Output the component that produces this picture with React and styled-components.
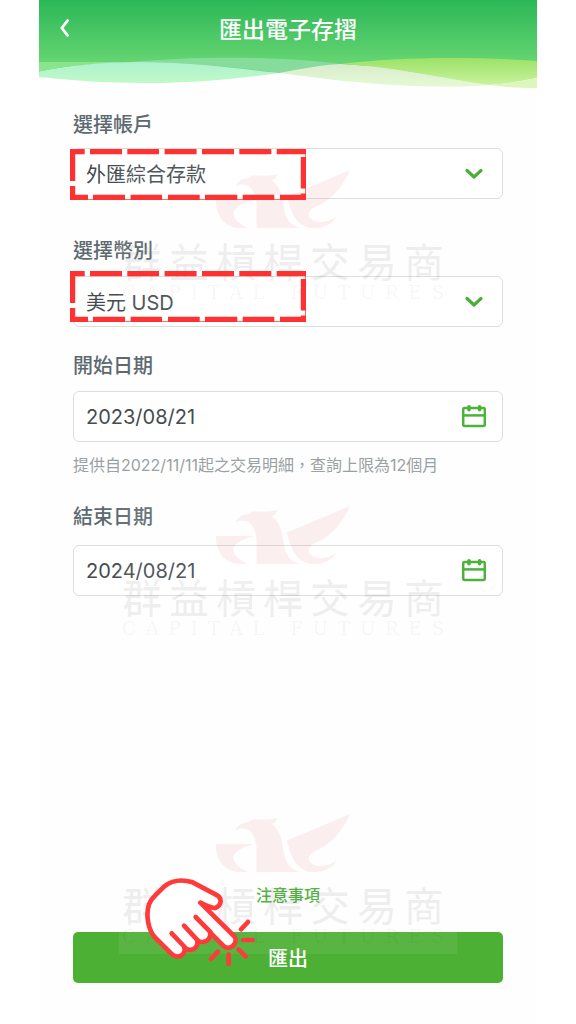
import React, { useState } from "react";
import styled, { createGlobalStyle } from "styled-components";

const ACCOUNTS = ["外匯綜合存款"];
const CURRENCIES = ["美元 USD"];

const BackIcon = () => (
  <svg width="12" height="20" viewBox="0 0 12 20" fill="none" aria-hidden="true">
    <path
      d="M8.6 2.6L2.8 10L8.6 17.4"
      stroke="#fff"
      strokeWidth="2.8"
      strokeLinecap="round"
      strokeLinejoin="round"
    />
  </svg>
);

const ChevronIcon = () => (
  <svg width="24" height="24" viewBox="0 0 24 24" fill="none" aria-hidden="true">
    <path
      d="M5 8.5L12 15L19 8.5"
      stroke="#4cae38"
      strokeWidth="3.2"
      strokeLinecap="round"
      strokeLinejoin="round"
    />
  </svg>
);

const CalendarIcon = () => (
  <svg width="24" height="24" viewBox="0 0 24 24" fill="none" aria-hidden="true">
    <g stroke="#4cb239" strokeWidth="2.5">
      <rect x="1.2" y="3" width="21.6" height="18" rx="1.4" />
      <path d="M1.2 10.4H23" />
      <path d="M7 1.8V4.8M17.6 1.8V4.8" strokeWidth="3.6" strokeLinecap="round" />
    </g>
  </svg>
);

const HeaderWaves = () => (
  <WavesSvg viewBox="0 0 498 88" preserveAspectRatio="none" aria-hidden="true">
    <defs>
      <linearGradient id="base" x1="0" y1="0" x2="0" y2="1">
        <stop offset="0" stopColor="#2cb757" />
        <stop offset="1" stopColor="#6fda76" />
      </linearGradient>
      <linearGradient id="mint" x1="0" y1="0" x2="0" y2="1">
        <stop offset="0" stopColor="#aef0d0" />
        <stop offset="1" stopColor="#c0fac6" />
      </linearGradient>
      <linearGradient id="cream" x1="0" y1="0" x2="0" y2="1">
        <stop offset="0" stopColor="#d9ecd0" />
        <stop offset="1" stopColor="#e4fad2" />
      </linearGradient>
      <linearGradient id="lime" x1="0" y1="0" x2="0" y2="1">
        <stop offset="0" stopColor="#9be267" />
        <stop offset="1" stopColor="#caf29e" />
      </linearGradient>
    </defs>
    <path d="M0 0H498V66H300L240 73L120 66H0Z" fill="url(#base)" />
    <path d="M0 62H92C60 63 30 66 0 72Z" fill="#8ae48d" />
    <path d="M92 62C160 56 240 56 302 64L240 73C190 66 140 62 92 62Z" fill="#86dc9c" />
    <path
      d="M0 72C30 66 60 62 100 62C150 62 195 68 240 73C195 79 155 83 105 83C65 83 30 80 0 77Z"
      fill="url(#mint)"
    />
    <path
      d="M240 73C262 69 280 65 302 64C350 66 400 78 450 85C430 87 400 87 375 86C325 84 285 79 240 73Z"
      fill="url(#cream)"
    />
    <path
      d="M302 64C335 60 370 58 410 58C445 58 475 59 498 61V78C482 81 466 84 450 85C400 78 350 66 302 64Z"
      fill="url(#lime)"
    />
    <path d="M450 85C466 84 482 81 498 78V88C480 88 465 87 450 85Z" fill="#ddf6bc" />
  </WavesSvg>
);

const Eagle = () => (
  <svg width="134" height="58" viewBox="0 0 402 174" fill="#d8404a" opacity="0.08">
    <path d="M0 90H112C88 99 54 108 52 130C52 150 75 165 96 174H68C26 172 -2 136 0 90Z" />
    <path d="M122 174V110C122 76 108 50 92 46C82 43 70 42 58 50C64 34 78 27 96 24C102 20 110 17 118 16C140 17 164 18 184 12C182 22 176 28 168 30C200 56 198 92 206 128C213 154 230 168 252 174Z" />
    <path d="M212 80L402 0C380 50 350 85 310 105C284 116 274 126 279 140C292 160 330 162 362 140C347 164 322 174 290 174C236 170 226 122 212 80Z" />
  </svg>
);

const Watermark = ({ top }) => (
  <WatermarkBox $top={top} aria-hidden="true">
    <Eagle />
    <BrandName>
      {Array.from("群益槓桿交易商").map((char) => (
        <span key={char}>{char}</span>
      ))}
    </BrandName>
    <BrandLatin>
      {Array.from("CAPITAL FUTURES").map((char, i) => (
        <span key={i}>{char}</span>
      ))}
    </BrandLatin>
  </WatermarkBox>
);

// dashed highlight drawn round the value the user has to choose
const Callout = ({ top }) => (
  <CalloutSvg $top={top} viewBox="0 0 236 51" fill="none" aria-hidden="true">
    <rect x="2.5" y="2.5" width="231" height="46" stroke="#fff" strokeWidth="5" />
    <path d="M235.5 0V50.5H0" stroke="#ff3131" strokeOpacity="0.7" />
    <g stroke="#ff3131" strokeWidth="5.2">
      <path d="M0 2.6H14.7M20 2.6H52M57.3 2.6H89M94.6 2.6H126.6M132 2.6H164M169.3 2.6H201.3M206.7 2.6H236" />
      <path d="M0 48.4H18M23 48.4H55M60.6 48.4H92M98 48.4H129.7M135 48.4H167.3M172.7 48.4H204.3M210 48.4H236" />
      <path d="M2.6 0V32M2.6 37V51M233.4 8V39.5M233.4 44.5V51" />
    </g>
  </CalloutSvg>
);

const TapHand = () => (
  <HandSvg
    viewBox="45 25 330 267"
    stroke="#ff3a3a"
    strokeWidth="14"
    strokeLinecap="round"
    strokeLinejoin="round"
    fill="none"
    aria-hidden="true"
  >
    <path
      fill="#fff"
      d="M211 99C240 114 248 116 256 115C273 110 278 88 262 77L188 38C155 28 125 33 103 50L75 78C50 100 50 130 54 155C58 180 66 195 78 206L122 250C134 263 150 264 160 252C164 246 165 240 163 234C175 244 190 242 198 232C203 226 203 220 202 212C213 220 228 218 236 208C240 202 242 197 241 189L282 230C292 238 308 234 314 222C318 214 317 204 312 199Z"
    />
    <path d="M197 142L242 188M162 168L203 212M125 191L164 232" />
    <path d="M354 157L333 179M340 211H368M326 240L347 260M296 255V283M264 246L243 268" />
  </HandSvg>
);

const SelectField = ({ id, label, options, gap, calloutTop }) => (
  <Field $gap={gap}>
    <Label htmlFor={id}>{label}</Label>
    <Control>
      <Select id={id}>
        {options.map((option) => (
          <option key={option}>{option}</option>
        ))}
      </Select>
      <SelectArrow>
        <ChevronIcon />
      </SelectArrow>
      <Callout top={calloutTop} />
    </Control>
  </Field>
);

const DateField = ({ id, label, value, onChange, gap, hint }) => (
  <Field $gap={gap}>
    <Label htmlFor={id}>{label}</Label>
    <Control>
      <DateInput
        id={id}
        type="text"
        value={value}
        onChange={(event) => onChange(event.target.value)}
      />
      <IconButton type="button" aria-label={label}>
        <CalendarIcon />
      </IconButton>
    </Control>
    {hint && <Hint>{hint}</Hint>}
  </Field>
);

export default function App() {
  const [startDate, setStartDate] = useState("2023/08/21");
  const [endDate, setEndDate] = useState("2024/08/21");

  return (
    <>
      <GlobalStyle />
      <Screen>
        <Header>
          <HeaderWaves />
          <HeaderBar>
            <BackButton type="button" aria-label="返回">
              <BackIcon />
            </BackButton>
            <Title>匯出電子存摺</Title>
          </HeaderBar>
        </Header>
        <Form onSubmit={(event) => event.preventDefault()}>
          <Fields>
            <SelectField
              id="account"
              label="選擇帳戶"
              options={ACCOUNTS}
              gap={12}
              calloutTop={0}
            />
            <SelectField
              id="currency"
              label="選擇幣別"
              options={CURRENCIES}
              gap={14}
              calloutTop={-6}
            />
            <DateField
              id="start"
              label="開始日期"
              value={startDate}
              onChange={setStartDate}
              gap={14}
              hint="提供自2022/11/11起之交易明細，查詢上限為12個月"
            />
            <DateField
              id="end"
              label="結束日期"
              value={endDate}
              onChange={setEndDate}
              gap={17}
            />
          </Fields>
          <Footer>
            <NoticeLink href="#notice">注意事項</NoticeLink>
            <SubmitRow>
              <SubmitButton type="submit">匯出</SubmitButton>
              <TapHand />
            </SubmitRow>
          </Footer>
        </Form>
        <Watermark top={165} />
        <Watermark top={501} />
        <Watermark top={809} />
      </Screen>
    </>
  );
}

const GlobalStyle = createGlobalStyle`
  * {
    box-sizing: border-box;
  }

  body {
    margin: 0;
    background: #fff;
    font-family: Inter, "Noto Sans CJK TC", sans-serif;
  }

  button,
  input,
  select {
    font-family: inherit;
  }
`;

const Screen = styled.div`
  position: relative;
  display: flex;
  flex-direction: column;
  min-height: 100vh;
  margin: 0 39px;
  background: #fefefe;
`;

const Header = styled.header`
  position: relative;
  height: 88px;
`;

const WavesSvg = styled.svg`
  position: absolute;
  inset: 0;
  width: 100%;
  height: 100%;
`;

const HeaderBar = styled.div`
  position: relative;
  display: grid;
  grid-template-columns: 52px 1fr 52px;
  align-items: center;
  height: 56px;
`;

const BackButton = styled.button`
  display: flex;
  justify-content: center;
  padding: 0;
  border: none;
  background: none;
`;

const Title = styled.h1`
  margin: 0;
  color: #fff;
  font-family: "Noto Sans CJK TC", sans-serif;
  font-size: 23px;
  font-weight: 500;
  line-height: 32px;
  text-align: center;
`;

const Form = styled.form`
  display: flex;
  flex: 1;
  flex-direction: column;
  padding: 24px 34px 41px;
`;

const Fields = styled.div`
  display: flex;
  flex-direction: column;
`;

const Field = styled.div`
  display: grid;
  row-gap: ${({ $gap }) => $gap}px;

  & + & {
    margin-top: 26px;
  }

  &:first-child + & {
    margin-top: 39px;
  }
`;

const Label = styled.label`
  color: #5d6970;
  font-family: "Noto Sans CJK TC", sans-serif;
  font-size: 20px;
  font-weight: 500;
  line-height: 24px;
`;

const Control = styled.div`
  position: relative;
  display: grid;
  grid-template-columns: 1fr 40px;
  align-items: center;
  height: 51px;
  border: 1px solid #dcdddd;
  border-radius: 6px;
  background: #fff;
`;

const Select = styled.select`
  grid-area: 1 / 1 / 2 / 3;
  width: 100%;
  height: 100%;
  padding: 2px 40px 0 12px;
  border: none;
  background: none;
  color: #444c50;
  font-size: 20px;
  appearance: none;
`;

const SelectArrow = styled.span`
  display: flex;
  grid-area: 1 / 2;
  pointer-events: none;
`;

const DateInput = styled.input`
  width: 100%;
  height: 100%;
  padding: 0 12px;
  border: none;
  background: none;
  color: #444c50;
  font-size: 20px;
`;

const IconButton = styled.button`
  display: flex;
  padding: 0;
  border: none;
  background: none;
`;

const Hint = styled.p`
  margin: -3px 0 1px;
  color: #9ba1a3;
  font-size: 16px;
  line-height: 24px;
`;

const CalloutSvg = styled.svg`
  position: absolute;
  top: ${({ $top }) => $top}px;
  left: -4px;
  z-index: 2;
  width: 236px;
  height: 51px;
  pointer-events: none;
`;

const Footer = styled.footer`
  display: flex;
  flex-direction: column;
  align-items: center;
  gap: 26px;
  margin-top: auto;
`;

const NoticeLink = styled.a`
  color: #4cae38;
  font-family: "Noto Sans CJK TC", sans-serif;
  font-size: 16px;
  font-weight: 500;
  line-height: 24px;
  text-decoration: none;
`;

const SubmitRow = styled.div`
  position: relative;
  width: 100%;
`;

const SubmitButton = styled.button`
  display: block;
  width: 100%;
  height: 51px;
  border: none;
  border-radius: 5px;
  background: #4cb034;
  color: #fff;
  font-size: 20px;
  font-weight: 500;
`;

const HandSvg = styled.svg`
  position: absolute;
  top: -54px;
  left: 72px;
  z-index: 2;
  width: 110px;
  height: 89px;
  pointer-events: none;
`;

const WatermarkBox = styled.div`
  position: absolute;
  top: ${({ $top }) => $top}px;
  left: 50%;
  z-index: 1;
  display: flex;
  flex-direction: column;
  align-items: center;
  width: 338px;
  height: 145px;
  padding: 5px 13px 0 3px;
  background: rgba(255, 255, 255, 0.07);
  transform: translateX(-50%);
  pointer-events: none;
`;

const BrandName = styled.div`
  display: flex;
  justify-content: space-between;
  width: 100%;
  margin-top: 10px;
  color: rgba(0, 0, 0, 0.06);
  font-family: "Noto Sans CJK TC", sans-serif;
  font-size: 40px;
  font-weight: 500;
  line-height: 44px;
`;

const BrandLatin = styled.div`
  display: flex;
  justify-content: space-between;
  width: 100%;
  margin-top: 1px;
  color: rgba(0, 0, 0, 0.05);
  font-family: "DejaVu Serif", serif;
  font-size: 18px;
  line-height: 20px;
  white-space: pre;
`;
